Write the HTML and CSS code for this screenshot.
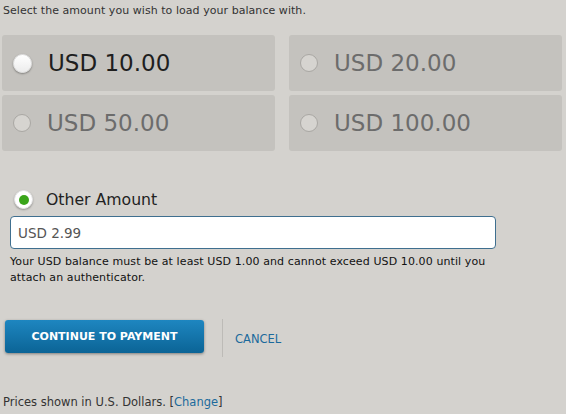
FILE: index.html
```html
<!DOCTYPE html>
<html>
<head>
<meta charset="utf-8">
<link rel="stylesheet" href="styles.css">
</head>
<body>
<div class="page">
  <p class="intro">Select the amount you wish to load your balance with.</p>
  <div class="amounts">
    <div class="amount active"><span class="radio"></span><span class="label">USD 10.00</span></div>
    <div class="amount"><span class="radio"></span><span class="label">USD 20.00</span></div>
    <div class="amount"><span class="radio"></span><span class="label">USD 50.00</span></div>
    <div class="amount"><span class="radio"></span><span class="label">USD 100.00</span></div>
  </div>
  <div class="other">
    <span class="radio checked"></span><span class="other-label">Other Amount</span>
  </div>
  <div class="input-wrap"><div class="input">USD 2.99</div></div>
  <p class="note">Your USD balance must be at least USD 1.00 and cannot exceed USD 10.00 until you attach an authenticator.</p>
  <div class="actions">
    <a class="btn">CONTINUE TO PAYMENT</a>
    <span class="sep"></span>
    <a class="cancel">CANCEL</a>
  </div>
  <p class="footer">Prices shown in U.S. Dollars. [<a class="link">Change</a>]</p>
</div>
</body>
</html>
```
FILE: styles.css
```css
html, body { margin: 0; padding: 0; background: #d4d2ce; }
body { font-family: "DejaVu Sans", Verdana, sans-serif; color: #222; width: 566px; height: 414px; overflow: hidden; }
.page { padding: 0 4px 0 2px; }
.intro { margin: 0; padding: 4px 0 0 1px; font-size: 11px; line-height: 14px; color: #333; letter-spacing: 0.05px; }
.amounts { display: grid; grid-template-columns: 273px 273px; column-gap: 14px; row-gap: 4px; margin-top: 17px; }
.amount { height: 56px; background: #c4c2be; border-radius: 3px; display: flex; align-items: center; }
.radio { width: 18px; height: 18px; border-radius: 50%; background: #d6d4d0; border: 1px solid #a9a7a3; box-sizing: border-box; margin-left: 11px; flex: none; position: relative; }
.amount.active .radio { background: linear-gradient(#fff, #ececec); border-color: #e0e0e0; box-shadow: 0 1px 2px rgba(0,0,0,0.35); width: 19px; height: 19px; margin-left: 11px; }
.label { font-size: 23px; color: #6c6c6c; margin-left: 16px; }
.amount.active .label { color: #1e1e1e; margin-left: 16px; }
.other { display: flex; align-items: center; margin-top: 37px; height: 22px; }
.radio.checked { width: 19px; height: 19px; background: #fff; border-color: #e6e6e6; box-shadow: 0 1px 2px rgba(0,0,0,0.3); margin-left: 12px; }
.radio.checked::after { content: ""; position: absolute; left: 4px; top: 4px; width: 10px; height: 10px; border-radius: 50%; background: #3aa51a; }
.other-label { font-size: 15.7px; margin-left: 13px; color: #222; }
.input-wrap { padding-left: 8px; margin-top: 6px; }
.input { width: 486px; height: 33px; box-sizing: border-box; background: #fff; border: 1px solid #3f6f8f; border-radius: 4px; font-size: 13.5px; color: #555; padding: 0 7px; display: flex; align-items: center; }
.note { margin: 5px 0 0 8px; font-size: 11px; line-height: 16px; color: #111; width: 510px; letter-spacing: 0.1px; }
.actions { display: flex; align-items: center; margin-top: 29px; padding-left: 3px; }
.btn { width: 199px; height: 33px; border-radius: 3px; background: linear-gradient(#1e86c0, #0b6496); box-shadow: 0 1px 3px rgba(0,0,0,0.4); color: #fff; font-weight: bold; font-size: 11px; display: flex; align-items: center; justify-content: center; }
.sep { width: 1px; height: 38px; background: #bdbbb7; margin-left: 18px; margin-top: 4px; }
.cancel { margin-left: 12px; margin-top: 6px; font-size: 11.5px; color: #1b6a9c; }
.footer { margin: 38px 0 0 1px; font-size: 11.5px; color: #333; }
.link { color: #1b6a9c; }
```
